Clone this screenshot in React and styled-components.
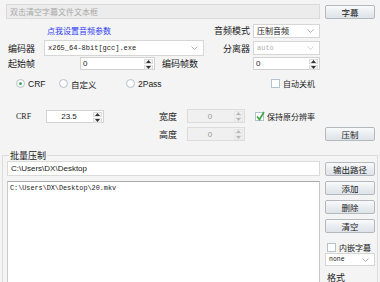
import React from "react";
import styled, { createGlobalStyle } from "styled-components";

const Global = createGlobalStyle`
  html, body { margin: 0; padding: 0; }
  body {
    width: 380px; height: 282px; overflow: hidden;
    background: #f4f4f4;
    font-family: "Noto Sans CJK SC", "Liberation Sans", sans-serif;
    color: #1a1a1a;
  }
`;

const Page = styled.div`
  box-sizing: border-box;
  width: 380px;
  height: 282px;
  overflow: hidden;
  padding: 4px 5px 0 6px;
  display: flex;
  flex-direction: column;
`;

const Row = styled.div`
  display: flex;
  align-items: center;
  height: ${(p) => p.$h}px;
  margin-top: ${(p) => p.$mt || 0}px;
  flex-shrink: 0;
`;

const TextBox = styled.div`
  box-sizing: border-box;
  flex: 1;
  height: 15px;
  border: 1px solid #dadada;
  background: ${(p) => (p.$disabled ? "#ececec" : "#fff")};
  color: ${(p) => (p.$disabled ? "#a8a8a8" : "#222")};
  font-size: 8px;
  line-height: 13px;
  padding-left: 3px;
  font-family: ${(p) => (p.$latin ? '"Liberation Sans", sans-serif' : 'inherit')};
  white-space: nowrap;
`;

const Button = styled.div`
  box-sizing: border-box;
  width: 50px;
  height: 14px;
  margin-left: ${(p) => (p.$ml === "auto" ? "auto" : `${p.$ml || 0}px`)};
  margin-top: ${(p) => p.$mt || 0}px;
  border: 1px solid #b4b9bd;
  border-radius: 2px;
  background: linear-gradient(#f9fafb, #e8ecf0 55%, #dde3e9);
  font-size: 8.5px;
  line-height: 12px;
  text-align: center;
  color: #222;
  flex-shrink: 0;
`;

const Link = styled.span`
  margin-left: ${(p) => p.$ml}px;
  color: #2f3cf0;
  font-size: 8px;
  line-height: 13px;
  white-space: nowrap;
`;

const Label = styled.span`
  box-sizing: border-box;
  width: ${(p) => (p.$w ? `${p.$w}px` : "auto")};
  margin-left: ${(p) => p.$ml || 0}px;
  padding-left: ${(p) => p.$pl || 0}px;
  font-size: ${(p) => p.$fs || 9}px;
  font-family: ${(p) => (p.$serif ? '"Liberation Serif", serif' : "inherit")};
  text-align: ${(p) => p.$align || "left"};
  white-space: nowrap;
  flex-shrink: 0;
  color: #1a1a1a;
`;

const RightField = styled.div`
  display: flex;
  align-items: center;
  width: 130px;
  margin-left: auto;
  margin-right: 55px;
  justify-content: flex-end;
`;

const SelectBox = styled.div`
  box-sizing: border-box;
  position: relative;
  width: ${(p) => p.$w}px;
  height: ${(p) => p.$h || 14}px;
  margin-left: ${(p) => p.$ml || 0}px;
  border: 1px solid #d6d6d6;
  background: #fff;
  color: ${(p) => (p.$disabled ? "#b0b0b0" : "#1a1a1a")};
  font-size: ${(p) => p.$fs || 8}px;
  font-family: ${(p) => (p.$mono ? '"Liberation Mono", monospace' : "inherit")};
  display: flex;
  align-items: center;
  padding-left: 3px;
  white-space: nowrap;
  flex-shrink: 0;
`;

const Chevron = styled.svg`
  position: absolute;
  right: 5px;
  top: 50%;
  margin-top: -2px;
`;

const Select = ({ value, w, h, fs, mono, disabled, ml }) => (
  <SelectBox $w={w} $h={h} $fs={fs} $mono={mono} $disabled={disabled} $ml={ml}>
    {value}
    <Chevron width="7" height="4" viewBox="0 0 7 4">
      <path d="M0.5 0.5 L3.5 3.5 L6.5 0.5" fill="none" stroke={disabled ? "#c8c8c8" : "#9a9a9a"} strokeWidth="0.8" />
    </Chevron>
  </SelectBox>
);

const SpinBox = styled.div`
  box-sizing: border-box;
  position: relative;
  width: ${(p) => p.$w}px;
  height: ${(p) => p.$h || 13}px;
  margin-left: ${(p) => p.$ml || 0}px;
  border: 1px solid ${(p) => (p.$disabled ? "#dcdcdc" : "#d2d2d2")};
  background: ${(p) => (p.$disabled ? "#f0f0f0" : "#fff")};
  display: flex;
  align-items: center;
  flex-shrink: 0;
`;

const SpinText = styled.span`
  flex: 1;
  padding: ${(p) => (p.$center ? "0 12px 0 0" : "0 0 0 2px")};
  text-align: ${(p) => (p.$center ? "center" : "left")};
  font-size: 8px;
  font-family: "Liberation Sans", sans-serif;
  color: ${(p) => (p.$disabled ? "#9a9a9a" : "#1a1a1a")};
`;

const SpinBtns = styled.div`
  position: absolute;
  right: 1px;
  top: 1px;
  bottom: 1px;
  width: 9px;
  display: flex;
  flex-direction: column;
  gap: 1px;
`;

const SpinBtn = styled.div`
  flex: 1;
  background: ${(p) => (p.$disabled ? "#f0f0f0" : "linear-gradient(#fbfbfb, #e9e9e9)")};
  border: 1px solid ${(p) => (p.$disabled ? "#e6e6e6" : "#dcdcdc")};
  box-sizing: border-box;
  display: flex;
  align-items: center;
  justify-content: center;
`;

const Spin = ({ value, w, h, center, disabled, ml }) => (
  <SpinBox $w={w} $h={h} $disabled={disabled} $ml={ml}>
    <SpinText $center={center} $disabled={disabled}>{value}</SpinText>
    <SpinBtns>
      <SpinBtn $disabled={disabled}>
        <svg width="5" height="3" viewBox="0 0 5 3"><path d="M0 3 L2.5 0 L5 3Z" fill={disabled ? "#b8b8b8" : "#333"} /></svg>
      </SpinBtn>
      <SpinBtn $disabled={disabled}>
        <svg width="5" height="3" viewBox="0 0 5 3"><path d="M0 0 L2.5 3 L5 0Z" fill={disabled ? "#b8b8b8" : "#333"} /></svg>
      </SpinBtn>
    </SpinBtns>
  </SpinBox>
);

const OptionItem = styled.div`
  display: flex;
  align-items: center;
  width: ${(p) => (p.$w ? `${p.$w}px` : "auto")};
  margin-left: ${(p) => (p.$ml === "auto" ? "auto" : `${p.$ml || 0}px`)};
  margin-top: ${(p) => p.$mt || 0}px;
  gap: 3px;
  flex-shrink: 0;
`;

const RadioCircle = styled.span`
  box-sizing: border-box;
  width: 9px;
  height: 9px;
  border-radius: 50%;
  border: 1px solid #b9c3cc;
  background: radial-gradient(circle, #fff 40%, #eef2f5);
  display: flex;
  align-items: center;
  justify-content: center;
  &::after {
    content: "";
    width: 3px;
    height: 3px;
    border-radius: 50%;
    background: ${(p) => (p.$on ? "#3fae5a" : "transparent")};
  }
`;

const OptionText = styled.span`
  font-size: ${(p) => p.$fs || 8.5}px;
  font-family: ${(p) => (p.$latin ? '"Liberation Sans", sans-serif' : "inherit")};
  color: #1a1a1a;
  white-space: nowrap;
`;

const CheckSquare = styled.span`
  box-sizing: border-box;
  position: relative;
  width: 9px;
  height: 9px;
  border: 1px solid #b4c2ce;
  background: #fff;
  flex-shrink: 0;
`;

const CheckMark = styled.svg`
  position: absolute;
  left: 0px;
  top: -2px;
`;

const Radio = ({ on, label, w, latin }) => (
  <OptionItem $w={w}>
    <RadioCircle $on={on} />
    <OptionText $latin={latin}>{label}</OptionText>
  </OptionItem>
);

const Check = ({ on, label, ml, mt }) => (
  <OptionItem $ml={ml} $mt={mt}>
    <CheckSquare>
      {on && (
        <CheckMark width="9" height="10" viewBox="0 0 9 10">
          <path d="M1 5.5 L3.5 8.5 L8 1" fill="none" stroke="#3aa446" strokeWidth="1.6" />
        </CheckMark>
      )}
    </CheckSquare>
    <OptionText $fs={8}>{label}</OptionText>
  </OptionItem>
);

const Group = styled.fieldset`
  margin: 9px -3px 0 -4px;
  padding: 0 2px 0 4px;
  border: 1px solid #dcdcdc;
  border-bottom: none;
  flex: 1;
  min-height: 0;
  display: flex;
  flex-direction: column;
`;

const Legend = styled.legend`
  margin-left: 2px;
  padding: 0 1px;
  font-size: 9px;
  line-height: 11px;
  color: #1a1a1a;
`;

const GroupBody = styled.div`
  display: flex;
  gap: 5px;
  margin-top: 5px;
`;

const ListBox = styled.div`
  box-sizing: border-box;
  flex: 1;
  height: 120px;
  border: 1px solid #c9c9c9;
  border-top-color: #a9a9a9;
  background: #fff;
  padding: 2px 2px;
  font-family: "Liberation Mono", monospace;
  font-size: 6.8px;
  line-height: 9px;
  color: #1a1a1a;
`;

const SideColumn = styled.div`
  width: 50px;
  display: flex;
  flex-direction: column;
  flex-shrink: 0;
`;

const SideLabel = styled.span`
  margin: 5px 0 0 2px;
  font-size: 9px;
`;

export default function App() {
  return (
    <>
      <Global />
      <Page>
        <Row $h={15}>
          <TextBox $disabled>双击清空字幕文件文本框</TextBox>
          <Button $ml={5}>字幕</Button>
        </Row>

        <Row $h={13} $mt={5}>
          <Link $ml={41}>点我设置音频参数</Link>
          <RightField>
            <Label $align="right" $pl={0}>音频模式</Label>
            <Select value="压制音频" w={67} h={14} ml={3} />
          </RightField>
        </Row>

        <Row $h={16} $mt={3}>
          <Label $w={38} $pl={2}>编码器</Label>
          <Select value="x265_64-8bit[gcc].exe" w={160} h={16} fs={7} mono />
          <RightField>
            <Label $align="right">分离器</Label>
            <Select value="auto" w={67} h={14} ml={3} fs={7} mono disabled />
          </RightField>
        </Row>

        <Row $h={13} $mt={1}>
          <Label $w={74} $pl={2}>起始帧</Label>
          <Spin value="0" w={75} />
          <Label $ml={7}>编码帧数</Label>
          <RightField>
            <Spin value="0" w={67} />
          </RightField>
        </Row>

        <Row $h={11} $mt={8}>
          <OptionItem $ml={10} />
          <Radio on label="CRF" w={43} latin />
          <Radio label="自定义" w={67} />
          <Radio label="2Pass" w={145} latin />
          <Check label="自动关机" />
        </Row>

        <Row $h={14} $mt={20}>
          <Label $w={30} $ml={10} $fs={8} $serif>CRF</Label>
          <Spin value="23.5" w={58} center />
          <Label $w={28} $ml={55}>宽度</Label>
          <Spin value="0" w={58} h={14} center disabled />
          <Check on label="保持原分辨率" ml={10} />
        </Row>

        <Row $h={14} $mt={4}>
          <Label $w={28} $ml={153}>高度</Label>
          <Spin value="0" w={58} h={14} center disabled />
          <Button $ml="auto" $mt={-1}>压制</Button>
        </Row>

        <Group>
          <Legend>批量压制</Legend>
          <Row $h={15}>
            <TextBox $latin>C:\Users\DX\Desktop</TextBox>
            <Button $ml={5}>输出路径</Button>
          </Row>
          <GroupBody>
            <ListBox>C:\Users\DX\Desktop\20.mkv</ListBox>
            <SideColumn>
              <Button>添加</Button>
              <Button $mt={5}>删除</Button>
              <Button $mt={5}>清空</Button>
              <Check label="内嵌字幕" ml={2} mt={9} />
              <Select value="none" w={50} h={13} fs={6.5} mono />
              <SideLabel>格式</SideLabel>
            </SideColumn>
          </GroupBody>
        </Group>
      </Page>
    </>
  );
}
